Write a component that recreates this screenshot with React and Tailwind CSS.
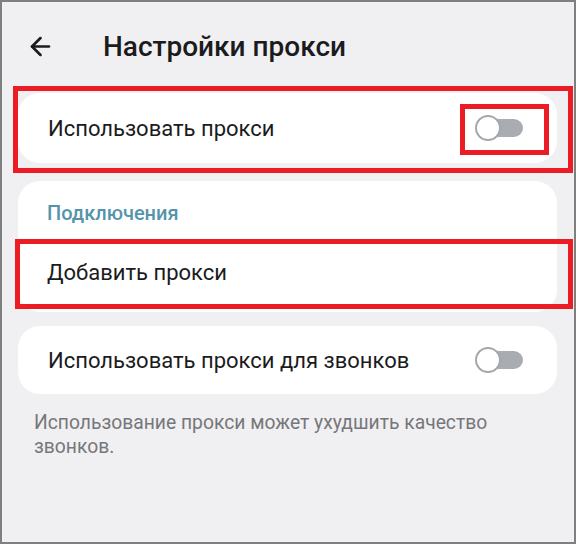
import { ArrowLeft } from 'lucide-react'

function Toggle() {
  return (
    <div className="relative w-[48px] h-[26px] flex items-center">
      <div className="absolute left-[2px] right-0 h-[18px] rounded-full bg-[#a9acb1]" />
      <div className="relative w-[26px] h-[26px] rounded-full bg-white border-[2.5px] border-[#a4a7ac]" />
    </div>
  )
}

export default function App() {
  return (
    <div
      className="relative w-[576px] h-[544px] overflow-hidden bg-[#f0f0f2] border-2 border-[#7f7f7f] text-[#1b1b1d]"
      style={{ fontFamily: 'Roboto, "Noto Sans", sans-serif' }}
    >
      <header className="h-[91px] flex items-center pl-[24px] pb-[2px]">
        <ArrowLeft className="w-[29px] h-[29px] text-[#1b1b1d]" strokeWidth={2.2} />
        <h1 className="ml-[48px] text-[28px] font-medium">Настройки прокси</h1>
      </header>

      <div className="ml-4 mr-[17px] flex flex-col">
        <div className="h-[70px] bg-white rounded-[22px] flex items-center justify-between pl-[30px] pr-[34px]">
          <span className="text-[22px]">Использовать прокси</span>
          <Toggle />
        </div>

        <div className="mt-[18px] h-[131px] bg-white rounded-[22px] flex flex-col pl-[29px]">
          <span className="mt-[17px] text-[20px] leading-[30px] font-medium text-[#5594ab]">Подключения</span>
          <span className="mt-[28px] text-[22px] leading-[33px]">Добавить прокси</span>
        </div>

        <div className="mt-[14px] h-[68px] bg-white rounded-[22px] flex items-center justify-between pl-[30px] pr-[34px]">
          <span className="text-[22px]">Использовать прокси для звонков</span>
          <Toggle />
        </div>

        <p className="mt-[17px] ml-[16px] text-[19.3px] leading-[24px] text-[#77777b] pr-[40px]">
          Использование прокси может ухудшить качество звонков.
        </p>
      </div>

      <div className="absolute left-[11px] top-[84px] w-[560px] h-[87px] border-[5px] border-[#ec1c24]" />
      <div className="absolute left-[458px] top-[102px] w-[89px] h-[51px] border-[5px] border-[#ec1c24]" />
      <div className="absolute left-[13px] top-[237px] w-[558px] h-[70px] border-[5px] border-[#ec1c24]" />
    </div>
  )
}
